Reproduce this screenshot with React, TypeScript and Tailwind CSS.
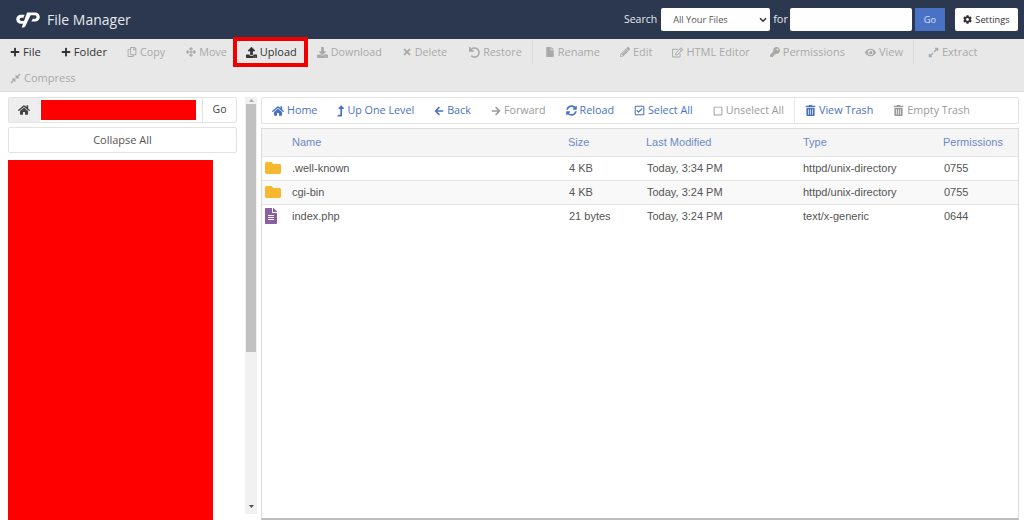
import type { ReactNode } from "react";
import {
  FaPlus, FaRegCopy, FaArrowsAlt, FaDownload, FaTimes, FaUndo, FaFile, FaPencilAlt, FaRegEdit,
  FaKey, FaEye, FaExpandAlt, FaHome, FaLevelUpAlt, FaArrowLeft, FaArrowRight, FaSyncAlt,
  FaRegCheckSquare, FaRegSquare, FaTrashAlt, FaCog, FaFolder, FaFileAlt, FaCompressAlt, FaUpload,
} from "react-icons/fa";

const sans = "font-['Open_Sans',sans-serif]";

type ToolProps = { icon: ReactNode; label: string; off?: boolean; tight?: boolean; wide?: boolean };

const Tool = ({ icon, label, off, tight, wide }: ToolProps) => (
  <div className={`flex h-[26px] items-center gap-[3px] px-[10px] ${tight ? "text-[10.75px]" : wide ? "text-[11.25px]" : "text-[11px]"} ${off ? "text-[#a9a9a9]" : "text-[#333]"}`}>
    {icon}
    <span>{label}</span>
  </div>
);

const NavItem = ({ icon, label, off }: ToolProps) => (
  <div className={`flex items-center gap-[3px] px-[10px] text-[10.75px] ${off ? "text-[#9a9a9a]" : "text-[#4a72c4]"}`}>
    {icon}
    <span>{label}</span>
  </div>
);

const CpLogo = () => (
  <svg width="24" height="16" viewBox="0 0 25 17" className="mr-[7px]">
    <path d="M9 3H5.2C2.2 3 0 5 0 7.8s2.2 4.8 5 4.8h2.4l1.6-3H5.4c-1 0-1.8-.8-1.8-1.8S4.400 6 5.500 6h2z" fill="#fff" />
    <path d="M11.500.500h8.300c3 0 5.200 2 5.200 4.800s-2.200 4.900-5.200 4.900h-3.800l1.600-3h2.100c1 0 1.800-.800 1.800-1.900s-.800-1.800-1.800-1.800h-4.500L10 14.600c-.6 1.100-1.500 1.900-2.900 1.900H5.800z" fill="#fff" />
  </svg>
);

const rows = [
  { name: ".well-known", size: "4 KB", date: "Today, 3:34 PM", type: "httpd/unix-directory", perm: "0755", dir: true, bg: "bg-white" },
  { name: "cgi-bin", size: "4 KB", date: "Today, 3:24 PM", type: "httpd/unix-directory", perm: "0755", dir: true, bg: "bg-[#f9f9f9]" },
  { name: "index.php", size: "21 bytes", date: "Today, 3:24 PM", type: "text/x-generic", perm: "0644", dir: false, bg: "bg-white" },
];

export default function App() {
  return (
    <div className={`flex h-[520px] w-[1024px] flex-col overflow-hidden bg-white ${sans}`}>
      {/* top bar */}
      <header className="flex h-[39px] shrink-0 items-center bg-[#2b3850] pl-[16px] pr-[6px]">
        <CpLogo />
        <span className="text-[14px] text-[#e6e8ec]">File Manager</span>
        <div className="ml-auto flex items-center">
          <span className="mr-[4px] text-[10.5px] text-[#e6e8ec]">Search</span>
          <div className="flex h-[23px] w-[109px] items-center justify-between rounded-[2px] bg-white pl-[12px] pr-[3px] text-[9.25px] text-[#555]">
            All Your Files
            <svg width="8" height="6" viewBox="0 0 8 6"><path d="M1 1.2l3 3 3-3" fill="none" stroke="#333" strokeWidth="1.6" /></svg>
          </div>
          <span className="ml-[3px] mr-[2px] text-[11px] text-[#e6e8ec]">for</span>
          <div className="h-[23px] w-[122px] rounded-[2px] bg-white" />
          <div className="ml-[3px] flex h-[23px] w-[30px] items-center justify-center bg-[#4a72c4] text-[9.25px] text-[#d8e0f2]">Go</div>
          <div className="ml-[10px] flex h-[23px] w-[63px] items-center justify-center gap-[3px] rounded-[2px] bg-white text-[9.25px] text-[#333]">
            <FaCog size={9} />
            Settings
          </div>
        </div>
      </header>

      {/* action toolbar */}
      <div className="relative flex h-[53px] shrink-0 flex-wrap content-start border-b border-[#dddddd] bg-[#e8e8e8]">
        <Tool wide icon={<FaPlus size={10} />} label="File" />
        <Tool wide icon={<FaPlus size={10} />} label="Folder" />
        <Tool off tight icon={<FaRegCopy size={10} />} label="Copy" />
        <div className="ml-[1px] mr-[-1px]">
          <Tool off tight icon={<FaArrowsAlt size={10} />} label="Move" />
        </div>
        <div className="relative">
          <Tool icon={<FaUpload size={11} />} label="Upload" />
          <div className="absolute left-[-3px] top-[-2px] h-[30px] w-[75px] border-[4px] border-[#f00000]" />
        </div>
        <Tool off tight icon={<FaDownload size={11} />} label="Download" />
        <Tool off tight icon={<FaTimes size={10} />} label="Delete" />
        <div className="ml-[2px]">
          <Tool off tight icon={<FaUndo size={11} />} label="Restore" />
        </div>
        <div className="my-[1px] mr-[2px] h-[24px] border-l border-[#dadada]" />
        <Tool off icon={<FaFile size={10} />} label="Rename" />
        <Tool off icon={<FaPencilAlt size={10} />} label="Edit" />
        <Tool off icon={<FaRegEdit size={11} />} label="HTML Editor" />
        <Tool off icon={<FaKey size={10} />} label="Permissions" />
        <Tool off icon={<FaEye size={11} />} label="View" />
        <div className="my-[1px] mr-[4px] h-[24px] border-l border-[#dadada]" />
        <Tool off icon={<FaExpandAlt size={11} />} label="Extract" />
        <Tool off icon={<FaCompressAlt size={11} />} label="Compress" />
      </div>

      <div className="flex min-h-0 flex-1">
        {/* left tree panel */}
        <aside className="flex w-[245px] shrink-0 flex-col px-[8px] pt-[5px]">
          <div className="flex h-[26px] items-stretch rounded-[2px] border border-[#e3e3e3]">
            <div className="flex w-[31px] items-center justify-center bg-[#eeeeee] pr-[1px] text-[#444]">
              <FaHome size={12} />
            </div>
            <div className="my-[2px] ml-[1px] w-[155px] bg-[#ff0000]" />
            <div className="ml-[6px] flex flex-1 items-center justify-center border-l border-[#e3e3e3] text-[10.5px] text-[#444]">Go</div>
          </div>
          <div className="mt-[4px] flex h-[26px] items-center justify-center rounded-[2px] border border-[#e3e3e3] text-[11px] text-[#555]">
            Collapse All
          </div>
          <div className="mt-[7px] w-[205px] flex-1 bg-[#ff0000]" />
        </aside>

        {/* scrollbar */}
        <div className="mb-[6px] mt-[5px] flex w-[12px] shrink-0 flex-col items-center bg-[#f1f1f1]">
          <svg width="7" height="7" viewBox="0 0 7 7" className="h-[7px] shrink-0"><path d="M1 5h5L3.500 2z" fill="#a8a8a8" /></svg>
          <div className="h-[248px] w-[10px] bg-[#c1c1c1]" />
          <div className="mb-[4px] mt-auto"><svg width="7" height="7" viewBox="0 0 7 7"><path d="M1 2h5L3.500 5z" fill="#505050" /></svg></div>
        </div>

        {/* right panel */}
        <main className="ml-[4px] flex min-w-0 flex-1 flex-col pr-[5px] pt-[5px]">
          <div className="flex h-[27px] shrink-0 items-stretch rounded-[2px] border border-[#e3e3e3]">
            <NavItem icon={<FaHome size={12} />} label="Home" />
            <NavItem icon={<FaLevelUpAlt className="h-[12px] w-[7px]" />} label="Up One Level" />
            <NavItem icon={<FaArrowLeft size={10} />} label="Back" />
            <NavItem off icon={<FaArrowRight size={10} />} label="Forward" />
            <NavItem icon={<FaSyncAlt size={11} />} label="Reload" />
            <NavItem icon={<FaRegCheckSquare size={11} />} label="Select All" />
            <NavItem off icon={<FaRegSquare size={10} />} label="Unselect All" />
            <div className="border-l border-[#e8e8e8]" />
            <NavItem icon={<FaTrashAlt size={11} />} label="View Trash" />
            <NavItem off icon={<FaTrashAlt size={11} />} label="Empty Trash" />
          </div>
          <div className="mt-[4px] min-h-0 flex-1 border border-b-2 border-[#dcdcdc] border-b-[#bdbdbd]">
            <table className="w-full table-fixed border-collapse font-['Liberation_Sans',sans-serif] text-[11px] text-[#555]">
              <colgroup>
                <col className="w-[30px]" />
                <col className="w-[276px]" />
                <col className="w-[78px]" />
                <col className="w-[157px]" />
                <col className="w-[140px]" />
                <col />
              </colgroup>
              <thead>
                <tr className="h-[27px] bg-[#f5f5f5] text-left text-[#6a8acb]">
                  <th />
                  <th className="font-normal">Name</th>
                  <th className="font-normal">Size</th>
                  <th className="font-normal">Last Modified</th>
                  <th className="font-normal">Type</th>
                  <th className="font-normal">Permissions</th>
                </tr>
              </thead>
              <tbody>
                {rows.map((r) => (
                  <tr key={r.name} className={`h-[24px] border-t border-[#e4e4e4] ${r.bg}`}>
                    <td className="pl-[3px]">
                      {r.dir ? <FaFolder size={16} className="text-[#f5b82e]" /> : <FaFileAlt size={16} className="ml-[-2px] text-[#8e5ea2]" />}
                    </td>
                    <td>{r.name}</td>
                    <td className="pl-[1px]">{r.size}</td>
                    <td className="pl-[1px]">{r.date}</td>
                    <td>{r.type}</td>
                    <td className="pl-[1px]">{r.perm}</td>
                  </tr>
                ))}
              </tbody>
            </table>
          </div>
        </main>
      </div>
    </div>
  );
}
